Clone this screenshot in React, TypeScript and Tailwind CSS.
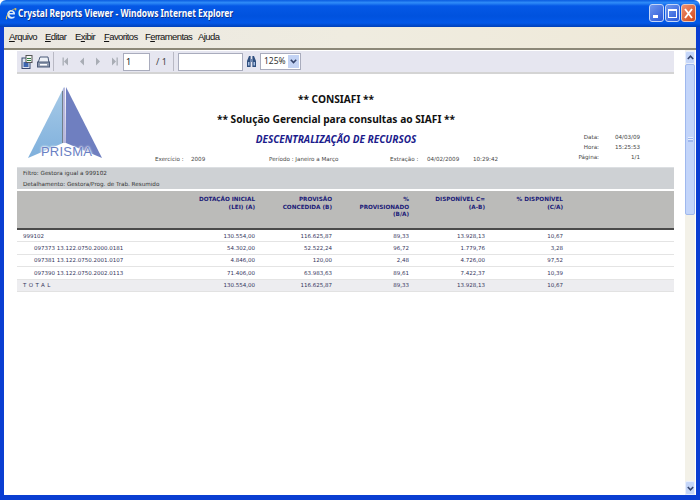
import React from "react";

const BLUE = "text-[#1c1c78]";

function Menu({ pre, u, post, w }: { pre?: string; u: string; post: string; w: string }) {
  return (
    <span className={`${w} shrink-0 text-[9.5px] text-[#111] font-['Liberation_Sans',sans-serif] tracking-[-0.6px]`}>
      {pre}
      <span className="underline">{u}</span>
      {post}
    </span>
  );
}

function Tri({ dir }: { dir: "first" | "prev" | "next" | "last" }) {
  const left = dir === "first" || dir === "prev";
  const bar = dir === "first" || dir === "last";
  return (
    <svg width="8" height="9" viewBox="0 0 8 9" className="shrink-0 block">
      <polygon points={left ? "6,0.5 2,4.5 6,8.5" : "2,0.5 6,4.5 2,8.5"} fill="#a9adb5" />
      {bar && <rect x={left ? 0.5 : 6.5} y="0.5" width="1.3" height="8" fill="#a9adb5" />}
    </svg>
  );
}

function Sep() {
  return <span className="w-px h-[19px] bg-[#b9b9c4] shrink-0" />;
}

const headers = [
  ["DOTAÇÃO INICIAL", "(LEI) (A)"],
  ["PROVISÃO", "CONCEDIDA (B)"],
  ["%", "PROVISIONADO", "(B/A)"],
  ["DISPONÍVEL C=", "(A-B)"],
  ["% DISPONÍVEL", "(C/A)"],
];

const rows = [
  { l: "999102", v: ["130.554,00", "116.625,87", "89,33", "13.928,13", "10,67"], ind: false, total: false },
  { l: "097373 13.122.0750.2000.0181", v: ["54.302,00", "52.522,24", "96,72", "1.779,76", "3,28"], ind: true, total: false },
  { l: "097381 13.122.0750.2001.0107", v: ["4.846,00", "120,00", "2,48", "4.726,00", "97,52"], ind: true, total: false },
  { l: "097390 13.122.0750.2002.0113", v: ["71.406,00", "63.983,63", "89,61", "7.422,37", "10,39"], ind: true, total: false },
  { l: "T O T A L", v: ["130.554,00", "116.625,87", "89,33", "13.928,13", "10,67"], ind: false, total: true },
];

const COLS = "grid grid-cols-[161px_77px_77px_77px_76px_78px_1fr]";

export default function App() {
  return (
    <div className="w-[700px] h-[500px] flex flex-col overflow-hidden bg-white font-['DejaVu_Sans',sans-serif]">
      {/* Title bar */}
      <div className="h-[27px] shrink-0 flex items-center pl-[5px] pr-[4px] rounded-t-[6px] bg-[linear-gradient(180deg,#0a5be0_0%,#2f8cf8_10%,#0558e6_22%,#0052de_60%,#0358e8_85%,#0040b8_100%)]">
        <svg width="12" height="14" viewBox="0 0 12 14" className="shrink-0">
          <path d="M2.2 8 C2 4.5 5 2.5 7.5 3.2 C9.6 3.8 10.3 5.6 10 7.6 L4.4 7.6 C4.6 9.8 7 10.6 9.6 9.2 L9.4 11 C6 12.6 2.4 11.4 2.2 8 Z M4.5 6.1 L8 6.1 C7.9 4.6 5 4.2 4.5 6.1 Z" fill="#d6e8fb" fillRule="evenodd" />
          <path d="M1 12.5 C-0.5 9 7 1.5 11 1 C12 2 11 3.5 10.5 4.2 C10.8 2.6 10 2.2 8.6 2.6 C5 3.6 0.8 9.6 2.2 11.9 Z" fill="#f1c94a" />
        </svg>
        <span className="ml-[1px] whitespace-nowrap origin-left scale-x-[0.765] text-[11px] font-bold text-white font-['Noto_Sans',sans-serif] [text-shadow:1px_1px_0_#0a2f8c]">
          Crystal Reports Viewer - Windows Internet Explorer
        </span>
        <div className="ml-auto flex gap-[1px] mb-[1px]">
          <div className="w-[15px] h-[18px] rounded-[3px] border border-[#c4d6f8] bg-[linear-gradient(135deg,#6f97ee,#2a58d8)] flex items-end justify-center pb-[3px] pr-[3px]">
            <span className="w-[5px] h-[3px] bg-white" />
          </div>
          <div className="w-[15px] h-[18px] rounded-[3px] border border-[#c4d6f8] bg-[linear-gradient(135deg,#6f97ee,#2a58d8)] flex items-center justify-center">
            <span className="w-[9px] h-[9px] border border-white border-t-[2px]" />
          </div>
          <div className="w-[15px] h-[18px] rounded-[3px] border border-[#e8c8b8] bg-[linear-gradient(135deg,#ee9070,#d04818)] flex items-center justify-center">
            <svg width="9" height="11" viewBox="0 0 9 11">
              <path d="M1 1 L8 10 M8 1 L1 10" stroke="#fff" strokeWidth="1.9" />
            </svg>
          </div>
        </div>
      </div>

      {/* Window body inside blue frame */}
      <div className="flex-1 min-h-0 flex flex-col border-l-[4px] border-r-[4px] border-b-[5px] border-[#0a3ed2]">
        {/* Menu */}
        <div className="h-[23px] shrink-0 flex items-center pl-[5px] bg-[linear-gradient(90deg,#ebe8e2,#efece0_50%,#efe9d8)] border-b-[2px] border-b-[#8c8878]">
          <Menu u="A" post="rquivo" w="w-[36px]" />
          <Menu u="E" post="ditar" w="w-[30px]" />
          <Menu pre="E" u="x" post="ibir" w="w-[29px]" />
          <Menu u="F" post="avoritos" w="w-[41px]" />
          <Menu pre="F" u="e" post="rramentas" w="w-[53px]" />
          <Menu pre="A" u="j" post="uda" w="w-[30px]" />
        </div>

        {/* Content + scrollbar */}
        <div className="flex-1 min-h-0 flex bg-white">
          <div className="flex-1 min-w-0 pl-[13px] pr-[11px] pt-[1px]">
            {/* Toolbar */}
            <div className="h-[23px] flex items-center pl-[4px] bg-[#e6e6f0] border-b-[2px] border-[#d4d4d4]">
              <svg width="12" height="14" viewBox="0 0 12 14" className="shrink-0">
                <rect x="1" y="3" width="8" height="10.5" fill="#dfe6f2" stroke="#3a4a70" />
                <rect x="2.5" y="7" width="5" height="5" fill="#3e66b0" />
                <rect x="5" y="0.5" width="6" height="7" fill="#f7f7f7" stroke="#555" />
                <path d="M6 3.5 H10 M6 5.5 H10" stroke="#2f7f40" />
              </svg>
              <svg width="13" height="12" viewBox="0 0 13 12" className="ml-[4px] shrink-0">
                <path d="M3 1 H11 L12 7 H1 Z" fill="#eef1f7" stroke="#4b5a78" />
                <rect x="0.5" y="6" width="12" height="5" fill="#8d98ad" stroke="#4b5a78" />
                <rect x="3" y="8" width="7" height="1.5" fill="#fff" />
              </svg>
              <span className="ml-[3px] flex"><Sep /></span>
              <span className="ml-[8px]"><Tri dir="first" /></span>
              <span className="ml-[8px]"><Tri dir="prev" /></span>
              <span className="ml-[8px]"><Tri dir="next" /></span>
              <span className="ml-[8px]"><Tri dir="last" /></span>
              <div className="ml-[5px] w-[27px] h-[18px] bg-white border border-[#a9acbd] flex items-center pl-[2px] text-[9px] text-[#222] font-['Noto_Sans',sans-serif]">1</div>
              <span className="ml-[6px] w-[17px] text-[9px] text-[#444] font-['Noto_Sans',sans-serif]">/ 1</span>
              <Sep />
              <div className="ml-[4px] w-[65px] h-[18px] bg-white border border-[#a9acbd]" />
              <svg width="11" height="13" viewBox="0 0 11 13" className="ml-[3px] shrink-0">
                <path d="M1 12 L1 6 L3 1 H4.6 V12 Z M10 12 L10 6 L8 1 H6.4 V12 Z" fill="#2f4f7f" />
                <rect x="4.6" y="4" width="1.8" height="3" fill="#6c86b0" />
                <rect x="2" y="7" width="1.5" height="3.5" fill="#a8c0e4" />
                <rect x="7.5" y="7" width="1.5" height="3.5" fill="#a8c0e4" />
              </svg>
              <div className="ml-[3px] w-[41px] h-[17px] bg-white border border-[#a9acbd] flex items-center pl-[3px] text-[8.5px] text-[#333] font-['Noto_Sans',sans-serif]">
                125%
                <span className="ml-auto w-[11px] h-[13px] mr-[1px] bg-[#c3d3f4] flex items-center justify-center">
                  <svg width="7" height="5" viewBox="0 0 7 5"><path d="M0.8 0.8 L3.5 3.6 L6.2 0.8" fill="none" stroke="#33436b" strokeWidth="1.6" /></svg>
                </span>
              </div>
            </div>

            {/* Report header */}
            <div className="flex h-[93px]">
              <div className="w-[138px] shrink-0 pl-[10px] pt-[13px]">
                <div className="relative w-[76px] h-[74px]">
                  <svg width="76" height="74" viewBox="0 0 76 74" className="block">
                    <defs>
                      <linearGradient id="lw" x1="0" y1="0" x2="0" y2="1">
                        <stop offset="0" stopColor="#a8cbe8" />
                        <stop offset="1" stopColor="#7fb0dc" />
                      </linearGradient>
                    </defs>
                    <polygon points="37,0 1,71 36,56" fill="url(#lw)" />
                    <polygon points="39,0 75,71 39,56" fill="#6f7fc0" />
                    <polygon points="36,2 38,0 39,56 36,56" fill="#b8b8dc" />
                    <rect x="35" y="4" width="1" height="52" fill="#70808c" />
                  </svg>
                  <span className="absolute left-[14px] top-[57px] text-[13px] leading-[15px] tracking-[0.2px] font-['Liberation_Sans',sans-serif] text-[#6a80c4] [text-shadow:0_0_2px_#fff,0_0_2px_#fff,0_0_3px_#fff]">
                    PRISMA
                  </span>
                </div>
              </div>
              <div className="flex-1 min-w-0 flex flex-col">
                <div className="flex flex-1 min-h-0">
                  <div className="w-[362px] flex flex-col items-center pt-[15px] shrink-0 font-['Noto_Sans',sans-serif]">
                    <div className="h-[20px] text-[10.2px] font-bold leading-[20px] text-[#111]">** CONSIAFI **</div>
                    <div className="h-[20px] text-[10.2px] font-bold leading-[20px] text-[#111]">** Solução Gerencial para consultas ao SIAFI **</div>
                    <div className="h-[21px] text-[10px] font-bold italic leading-[21px] text-[#1c1c8c]">DESCENTRALIZAÇÃO DE RECURSOS</div>
                  </div>
                  <div className="pt-[59px] text-[5.6px] text-[#444] leading-[9.5px]">
                    <div className="grid grid-cols-[82px_41px]">
                      <span className="text-right">Data:</span><span className="text-right">04/03/09</span>
                      <span className="text-right">Hora:</span><span className="text-right">15:25:53</span>
                      <span className="text-right mt-[1px]">Página:</span><span className="text-right mt-[1px]">1/1</span>
                    </div>
                  </div>
                </div>
                <div className="flex h-[11px] mb-[2px] text-[5.6px] text-[#444] items-center">
                  <span className="w-[36px]">Exercício :</span>
                  <span className="w-[78px]">2009</span>
                  <span className="w-[121px]">Período : Janeiro a Março</span>
                  <span className="w-[37px]">Extração :</span>
                  <span className="w-[46px]">04/02/2009</span>
                  <span>10:29:42</span>
                </div>
              </div>
            </div>

            {/* Filter band */}
            <div className="h-[22px] bg-[#ced1d4] flex flex-col justify-center gap-[2px] pl-[6px] text-[5.65px] text-[#333] leading-[9px] border-t border-[#dcdfe2]">
              <div>Filtro: Gestora igual a 999102</div>
              <div>Detalhamento: Gestora/Prog. de Trab. Resumido</div>
            </div>

            {/* Table header */}
            <div className={`${COLS} mt-[2px] h-[39px] bg-[#bbbbb9] border-b-[2px] border-[#4a4a4a] pt-[5px] text-[5.7px] font-bold leading-[7.5px] ${BLUE}`}>
              <div />
              {headers.map((h, i) => (
                <div key={i} className="text-right whitespace-nowrap">
                  {h.map((t) => (
                    <div key={t}>{t}</div>
                  ))}
                </div>
              ))}
            </div>

            {/* Rows */}
            {rows.map((r) => (
              <div
                key={r.l}
                className={`${COLS} items-center text-[5.5px] text-[#34345c] border-b-[1.5px] ${r.total ? "h-[12px] bg-[#ededf0] border-[#e2e2e2]" : "h-[12.4px] border-[#e4e4e4]"}`}
              >
                <div className={`whitespace-nowrap ${r.ind ? "pl-[17px]" : r.total ? "pl-[6px] tracking-[0.3px]" : "pl-[6px]"}`}>{r.l}</div>
                {r.v.map((v, i) => (
                  <div key={i} className="text-right">{v}</div>
                ))}
              </div>
            ))}
          </div>

          {/* Scrollbar */}
          <div className="w-[10px] shrink-0 mr-[1px] flex flex-col bg-[#f3f1e8] pt-[1px]">
            <div className="h-[13px] shrink-0 rounded-[2px] bg-[#c5d6f8] border border-[#e8eefc] flex items-center justify-center">
              <svg width="7" height="5" viewBox="0 0 7 5"><path d="M0.8 4 L3.5 1.2 L6.2 4" fill="none" stroke="#33436b" strokeWidth="1.5" /></svg>
            </div>
            <div className="h-[151px] shrink-0 rounded-[2px] bg-[#c3d5fa] border border-[#9fb8ee] flex items-center justify-center">
              <span className="w-[5px] h-[5px] bg-[linear-gradient(180deg,#e6eefd_20%,#9fb8ee_20%,#9fb8ee_40%,#e6eefd_40%,#e6eefd_60%,#9fb8ee_60%)]" />
            </div>
            <div className="flex-1" />
            <div className="h-[14px] shrink-0 rounded-[2px] bg-[#c5d6f8] border border-[#e8eefc] flex items-center justify-center">
              <svg width="7" height="5" viewBox="0 0 7 5"><path d="M0.8 1 L3.5 3.8 L6.2 1" fill="none" stroke="#33436b" strokeWidth="1.5" /></svg>
            </div>
          </div>
        </div>
      </div>
    </div>
  );
}
